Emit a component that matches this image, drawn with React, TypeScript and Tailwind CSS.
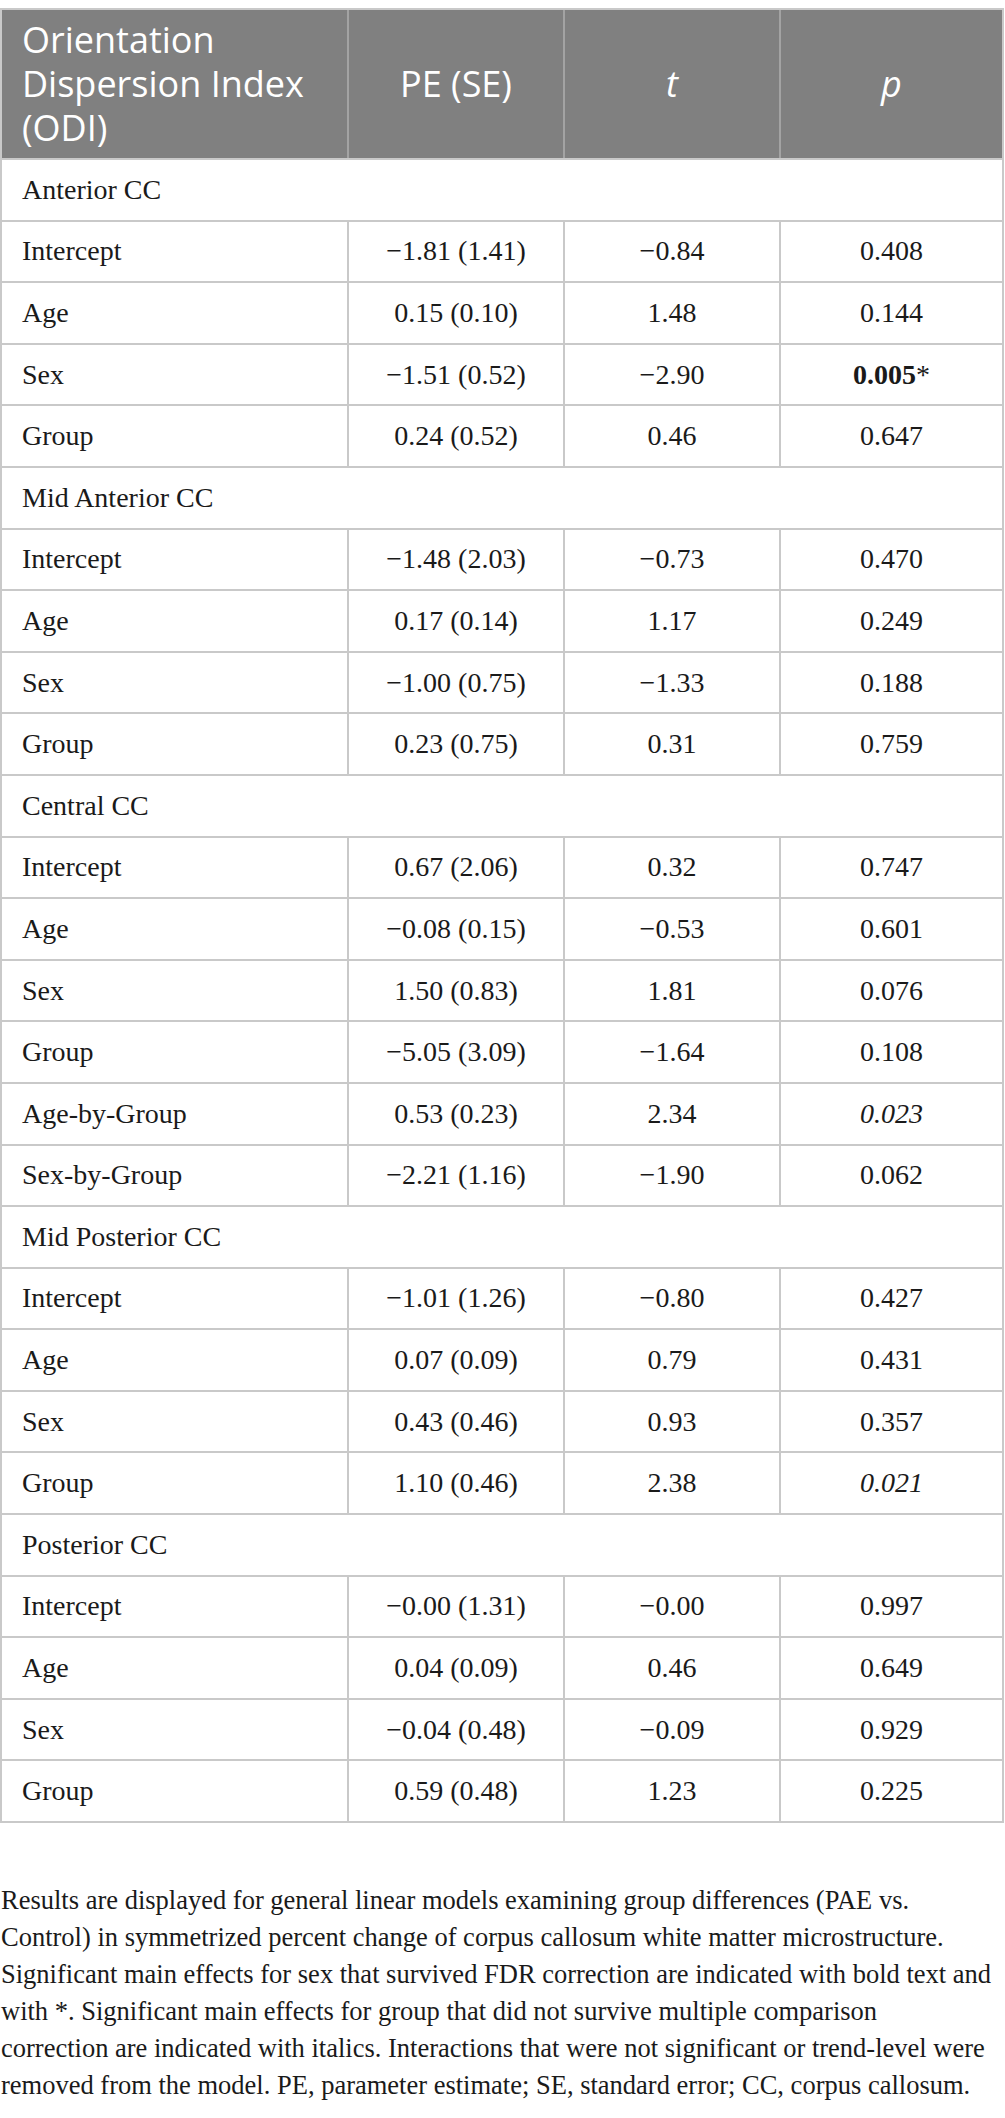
import React from 'react'

type Row = {
  label: string
  pe: string
  t: string
  p: React.ReactNode
}

type Section = {
  title: string
  rows: Row[]
}

const sections: Section[] = [
  {
    title: 'Anterior CC',
    rows: [
      { label: 'Intercept', pe: '−1.81 (1.41)', t: '−0.84', p: '0.408' },
      { label: 'Age', pe: '0.15 (0.10)', t: '1.48', p: '0.144' },
      {
        label: 'Sex',
        pe: '−1.51 (0.52)',
        t: '−2.90',
        p: (
          <>
            <span className="font-bold">0.005</span>*
          </>
        ),
      },
      { label: 'Group', pe: '0.24 (0.52)', t: '0.46', p: '0.647' },
    ],
  },
  {
    title: 'Mid Anterior CC',
    rows: [
      { label: 'Intercept', pe: '−1.48 (2.03)', t: '−0.73', p: '0.470' },
      { label: 'Age', pe: '0.17 (0.14)', t: '1.17', p: '0.249' },
      { label: 'Sex', pe: '−1.00 (0.75)', t: '−1.33', p: '0.188' },
      { label: 'Group', pe: '0.23 (0.75)', t: '0.31', p: '0.759' },
    ],
  },
  {
    title: 'Central CC',
    rows: [
      { label: 'Intercept', pe: '0.67 (2.06)', t: '0.32', p: '0.747' },
      { label: 'Age', pe: '−0.08 (0.15)', t: '−0.53', p: '0.601' },
      { label: 'Sex', pe: '1.50 (0.83)', t: '1.81', p: '0.076' },
      { label: 'Group', pe: '−5.05 (3.09)', t: '−1.64', p: '0.108' },
      { label: 'Age-by-Group', pe: '0.53 (0.23)', t: '2.34', p: <span className="italic">0.023</span> },
      { label: 'Sex-by-Group', pe: '−2.21 (1.16)', t: '−1.90', p: '0.062' },
    ],
  },
  {
    title: 'Mid Posterior CC',
    rows: [
      { label: 'Intercept', pe: '−1.01 (1.26)', t: '−0.80', p: '0.427' },
      { label: 'Age', pe: '0.07 (0.09)', t: '0.79', p: '0.431' },
      { label: 'Sex', pe: '0.43 (0.46)', t: '0.93', p: '0.357' },
      { label: 'Group', pe: '1.10 (0.46)', t: '2.38', p: <span className="italic">0.021</span> },
    ],
  },
  {
    title: 'Posterior CC',
    rows: [
      { label: 'Intercept', pe: '−0.00 (1.31)', t: '−0.00', p: '0.997' },
      { label: 'Age', pe: '0.04 (0.09)', t: '0.46', p: '0.649' },
      { label: 'Sex', pe: '−0.04 (0.48)', t: '−0.09', p: '0.929' },
      { label: 'Group', pe: '0.59 (0.48)', t: '1.23', p: '0.225' },
    ],
  },
]

const cols = 'grid grid-cols-[347px_216px_216px_1fr]'

function DataRow({ row }: { row: Row }) {
  return (
    <div className={`${cols} h-[61.6px] border-b-2 border-[#c9c9c9]`}>
      <div className="flex items-center pl-[20px] border-r-2 border-[#c9c9c9]">{row.label}</div>
      <div className="flex items-center justify-center border-r-2 border-[#c9c9c9]">{row.pe}</div>
      <div className="flex items-center justify-center border-r-2 border-[#c9c9c9]">{row.t}</div>
      <div className="flex items-center justify-center">{row.p}</div>
    </div>
  )
}

export default function App() {
  return (
    <div className="w-[1005px] min-h-[2118px] bg-white pt-[8px] text-[#1a1a1a] font-['Liberation_Serif',serif]">
      <div className="w-[1004px] border-x-2 border-t-2 border-[#c9c9c9]">
        {/* header */}
        <div
          className={`${cols} h-[150px] bg-[#808080] text-white text-[36px] leading-[44px] font-['Open_Sans',sans-serif] border-b-2 border-[#c9c9c9]`}
        >
          <div className="flex items-center pl-[20px] border-r-2 border-[#a3a3a3]">
            Orientation
            <br />
            Dispersion Index
            <br />
            (ODI)
          </div>
          <div className="flex items-center justify-center border-r-2 border-[#a3a3a3]">PE (SE)</div>
          <div className="flex items-center justify-center border-r-2 border-[#a3a3a3] italic">t</div>
          <div className="flex items-center justify-center italic">p</div>
        </div>

        <div className="text-[28px]">
          {sections.map((s) => (
            <div key={s.title}>
              <div className="h-[61.6px] flex items-center pl-[20px] border-b-2 border-[#c9c9c9]">{s.title}</div>
              {s.rows.map((r, i) => (
                <DataRow key={i} row={r} />
              ))}
            </div>
          ))}
        </div>
      </div>

      <p className="mt-[59px] pl-[1px] pr-[2px] text-[26.5px] leading-[37px] text-[#1a1a1a]">
        Results are displayed for general linear models examining group differences (PAE vs.
        <br />
        Control) in symmetrized percent change of corpus callosum white matter microstructure.
        <br />
        Significant main effects for sex that survived FDR correction are indicated with bold text and
        <br />
        with *. Significant main effects for group that did not survive multiple comparison
        <br />
        correction are indicated with italics. Interactions that were not significant or trend-level were
        <br />
        removed from the model. PE, parameter estimate; SE, standard error; CC, corpus callosum.
      </p>
    </div>
  )
}
